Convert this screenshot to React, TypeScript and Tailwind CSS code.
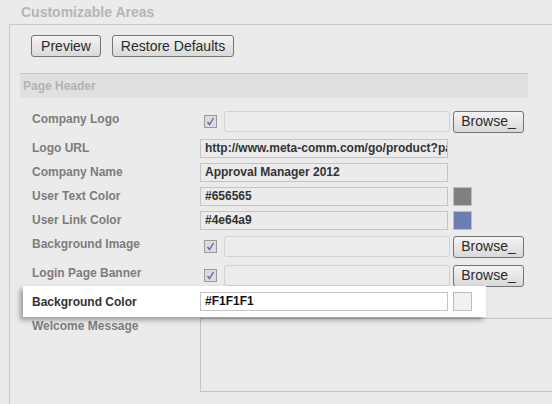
import React from 'react';

const labelCls = 'w-[168px] shrink-0 text-[12px] leading-[14px] font-bold text-[#7e7c7a]';
const inputCls =
  'h-[19px] border border-[#c4c4c4] bg-[#ebebeb] px-[4px] text-[12px] leading-[17px] font-bold text-[#333] whitespace-nowrap overflow-hidden';

const Check = () => (
  <div className="w-[13px] h-[13px] border border-[#9a9a9a] bg-[#dcdcdc] flex items-center justify-center">
    <svg width="9" height="9" viewBox="0 0 9 9">
      <path d="M1.5 5 L3.5 7.5 L7.5 1" fill="none" stroke="#5a68b0" strokeWidth="1.4" />
    </svg>
  </div>
);

const Btn = ({ children, w }: { children: React.ReactNode; w: string }) => (
  <div
    className={`${w} h-[22px] rounded-[3px] border border-[#747474] bg-gradient-to-b from-[#f4f4f4] to-[#d9d9d9] flex items-center justify-center text-[14px] text-[#2a2a2a]`}
  >
    {children}
  </div>
);

const FileRow = ({ label, mt }: { label: string; mt: string }) => (
  <div className={`flex ${mt} h-[21px] pl-[22px]`}>
    <div className={`${labelCls} pt-[1px]`}>{label}</div>
    <div className="flex items-center">
      <div className="ml-[4px] w-[13px]">
        <Check />
      </div>
      <div className="ml-[7px] w-[226px] h-[21px] rounded-[3px] border border-[#d2d2d2] bg-[#ececec]" />
      <div className="ml-[3px]">
        <Btn w="w-[71px]">Browse_</Btn>
      </div>
    </div>
  </div>
);

const TextRow = ({
  label,
  value,
  swatch,
  mt,
}: {
  label: string;
  value: string;
  swatch?: string;
  mt: string;
}) => (
  <div className={`flex ${mt} h-[19px] pl-[22px]`}>
    <div className={`${labelCls} pt-[2px]`}>{label}</div>
    <div className={`${inputCls} w-[248px]`}>{value}</div>
    {swatch && <div className={`ml-[5px] w-[19px] h-[19px] border border-[#bdbdbd] ${swatch}`} />}
  </div>
);

export default function App() {
  return (
    <div
      className="w-[552px] h-[404px] overflow-hidden bg-[#ebebeb] flex flex-col"
      style={{ fontFamily: '"Liberation Sans", Arial, sans-serif' }}
    >
      <div className="h-[24px] pl-[21px] pt-[4px] text-[14px] leading-[16px] font-bold text-[#b5b5b5]">
        Customizable Areas
      </div>
      <div className="ml-[9px] flex-1 border-l border-t border-[#c8c8c8] overflow-hidden">
        <div className="flex gap-[11px] mt-[10px] ml-[21px]">
          <Btn w="w-[70px]">Preview</Btn>
          <Btn w="w-[122px]">Restore Defaults</Btn>
        </div>
        <div className="mt-[16px] ml-[10px] w-[508px] h-[25px] border-t border-[#c8c8c8] bg-[#e0e0e0] pl-[3px] flex items-center text-[12px] font-bold text-[#b3b3b3]">
          Page Header
        </div>

        <FileRow label="Company Logo" mt="mt-[13px]" />
        <TextRow label="Logo URL" value="http://www.meta-comm.com/go/product?page=approval" mt="mt-[7px]" />
        <TextRow label="Company Name" value="Approval Manager 2012" mt="mt-[5px]" />
        <TextRow label="User Text Color" value="#656565" swatch="bg-[#808080]" mt="mt-[5px]" />
        <TextRow label="User Link Color" value="#4e64a9" swatch="bg-[#6d7db2]" mt="mt-[5px]" />
        <FileRow label="Background Image" mt="mt-[6px]" />
        <FileRow label="Login Page Banner" mt="mt-[8px]" />

        <div className="relative z-10 ml-[13px] w-[463px] h-[31px] bg-white shadow-[-3px_3px_5px_rgba(0,0,0,0.35)] flex items-center pl-[9px]">
          <div className="w-[168px] shrink-0 text-[12px] leading-[14px] font-bold text-[#333]">Background Color</div>
          <div className="w-[248px] h-[19px] border border-[#c4c4c4] bg-white px-[4px] text-[12px] leading-[17px] font-bold text-[#111]">
            #F1F1F1
          </div>
          <div className="ml-[5px] w-[19px] h-[19px] border border-[#bdbdbd] bg-[#f1f1f1]" />
        </div>

        <div className="flex pl-[22px] mt-[1px]">
          <div className={`${labelCls} pt-[1px]`}>Welcome Message</div>
          <div className="w-[420px] h-[74px] shrink-0 border border-[#c4c4c4] bg-[#ebebeb]" />
        </div>
      </div>
    </div>
  );
}
